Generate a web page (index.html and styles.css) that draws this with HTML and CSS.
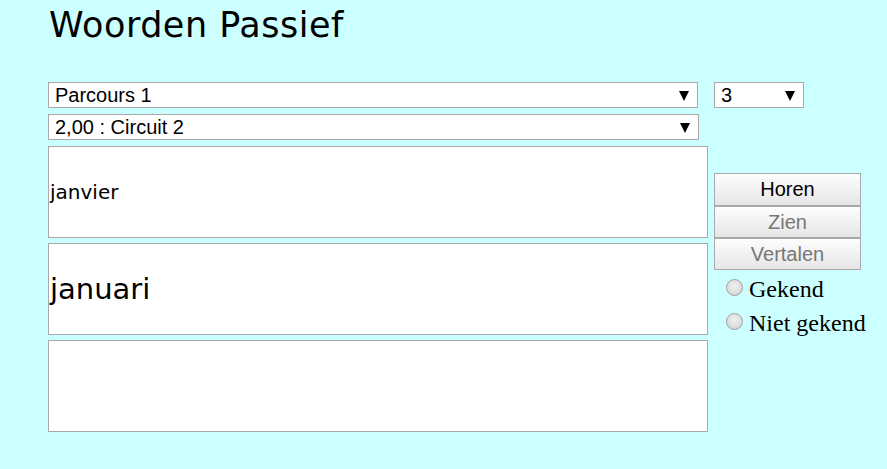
FILE: index.html
```html
<!DOCTYPE html>
<html lang="nl">
<head>
<meta charset="utf-8">
<title>Woorden Passief</title>
<link rel="stylesheet" href="styles.css">
</head>
<body>
<div class="page">
  <h1 class="title">Woorden Passief</h1>
  <div class="row row-first">
    <div class="sel sel-wide">
      <select class="select"><option>Parcours 1</option></select>
    </div>
    <div class="sel sel-small">
      <select class="select"><option>3</option></select>
    </div>
  </div>
  <div class="row">
    <div class="sel sel-wide2">
      <select class="select"><option>2,00 : Circuit 2</option></select>
    </div>
  </div>
  <div class="main">
    <div class="boxes">
      <div class="box box-small">janvier</div>
      <div class="box box-large">januari</div>
      <div class="box"></div>
    </div>
    <div class="side">
      <button class="btn btn-first">Horen</button>
      <button class="btn" disabled>Zien</button>
      <button class="btn" disabled>Vertalen</button>
      <label class="radio radio-first"><input type="radio" name="k" class="rad">Gekend</label>
      <label class="radio"><input type="radio" name="k" class="rad">Niet gekend</label>
    </div>
  </div>
</div>
</body>
</html>
```

FILE: styles.css
```css
html, body {
  margin: 0;
  padding: 0;
  background: #ccffff;
}
.page {
  padding-left: 48px;
  padding-top: 6px;
}
.title {
  margin: 0;
  font-family: "DejaVu Sans", Verdana, sans-serif;
  font-weight: normal;
  font-size: 35px;
  letter-spacing: 0.5px;
  line-height: 38px;
  color: #000;
  padding-left: 1px;
}
.row {
  display: flex;
  gap: 16px;
  margin-bottom: 6px;
}
.row-first {
  margin-top: 38px;
}
.sel {
  position: relative;
  height: 26px;
}
.sel::after {
  content: "";
  position: absolute;
  right: 9px;
  top: 9px;
  width: 0;
  height: 0;
  border-left: 5px solid transparent;
  border-right: 5px solid transparent;
  border-top: 10px solid #000;
  pointer-events: none;
}
.sel-wide { width: 650px; }
.sel-small { width: 90px; }
.sel-wide2 { width: 651px; }
.select {
  appearance: none;
  -webkit-appearance: none;
  width: 100%;
  height: 26px;
  margin: 0;
  box-sizing: border-box;
  border: 1px solid #a9a9a9;
  border-radius: 0;
  background: #fff;
  font-family: "Liberation Sans", Arial, sans-serif;
  font-size: 20px;
  color: #000;
  padding: 0 0 0 6px;
}
.main {
  display: flex;
  gap: 6px;
}
.boxes {
  display: flex;
  flex-direction: column;
  gap: 5px;
  width: 660px;
}
.box {
  box-sizing: border-box;
  height: 92px;
  border: 1px solid #a9a9a9;
  background: #fff;
  display: flex;
  align-items: center;
  padding-left: 1px;
  font-family: "DejaVu Sans", Verdana, sans-serif;
  color: #000;
}
.box-small { font-size: 20px; }
.box-large { font-size: 29px; }
.side {
  display: flex;
  flex-direction: column;
  padding-top: 27px;
}
.btn {
  box-sizing: border-box;
  width: 147px;
  height: 32px;
  margin: 0;
  border: 1px solid #a9a9a9;
  border-radius: 0;
  background: linear-gradient(#fdfdfd, #e6e6e6);
  font-family: "Liberation Sans", Arial, sans-serif;
  font-size: 20px;
  color: #000;
  padding: 0;
}
.btn-first { height: 33px; }
.btn:disabled { color: #777; }
.radio {
  display: flex;
  align-items: center;
  font-family: "Liberation Serif", "Times New Roman", serif;
  font-size: 24px;
  line-height: 34px;
  color: #000;
  padding-left: 12px;
}
.radio-first { margin-top: 2px; }
.rad {
  appearance: none;
  -webkit-appearance: none;
  width: 17px;
  height: 17px;
  margin: 0 6px 4px 0;
  border: 1px solid #a0a0a0;
  border-radius: 50%;
  box-sizing: border-box;
  background: radial-gradient(circle at 50% 40%, #f0f0f0, #cfcfcf);
}
```
